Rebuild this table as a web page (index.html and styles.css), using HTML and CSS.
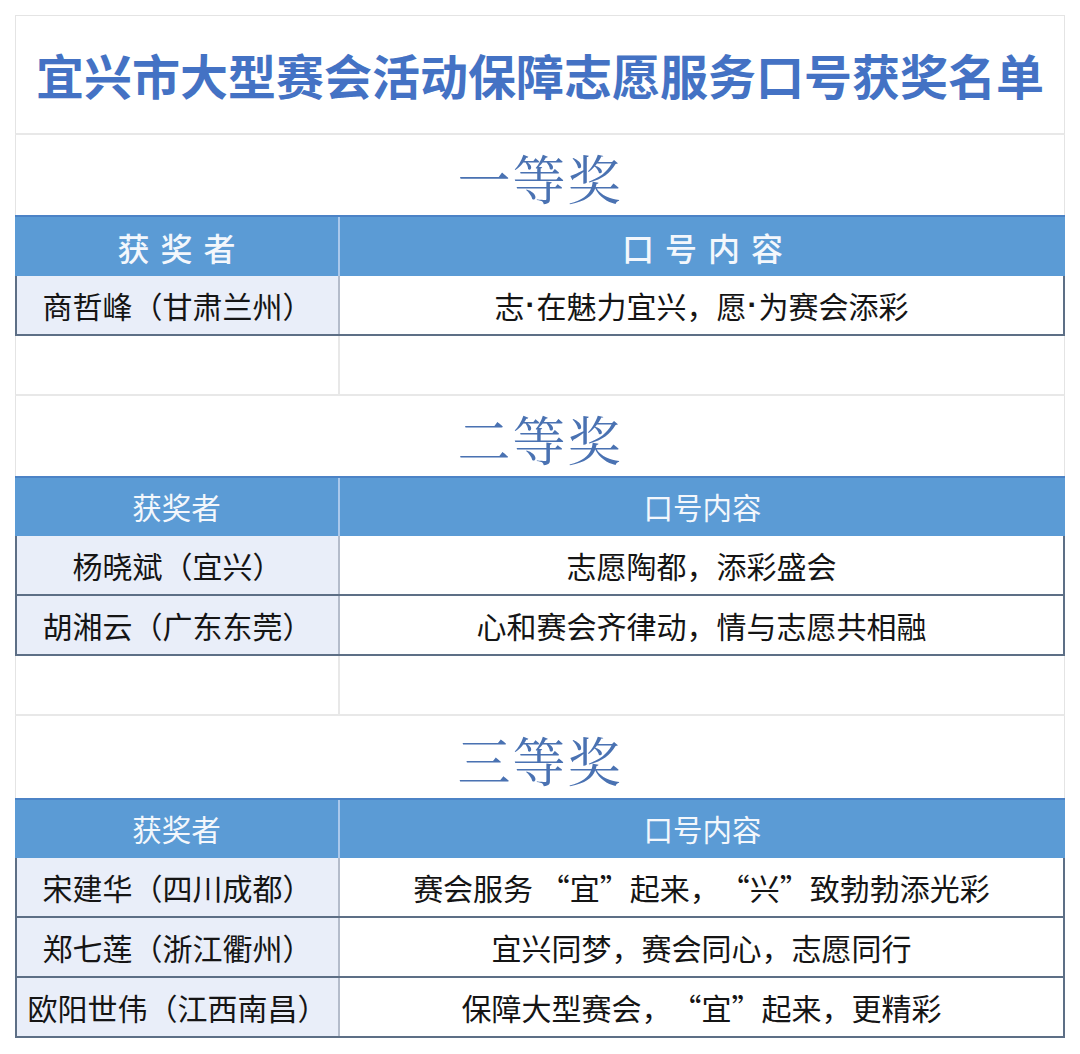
FILE: index.html
```html
<!DOCTYPE html>
<html lang="zh-CN">
<head>
<meta charset="utf-8">
<title>宜兴市大型赛会活动保障志愿服务口号获奖名单</title>
<link rel="stylesheet" href="styles.css">
</head>
<body>
<div class="sheet">
  <div class="title-row"><h1 class="title">宜兴市大型赛会活动保障志愿服务口号获奖名单</h1></div>

  <div class="section-row"><h2 class="section">一等奖</h2></div>
  <div class="head-row head-big"><div class="hc hc-left">获奖者</div><div class="hc">口号内容</div></div>
  <div class="data-row"><div class="dc dc-left">商哲峰（甘肃兰州）</div><div class="dc">志<span class="dot">·</span>在魅力宜兴，愿<span class="dot">·</span>为赛会添彩</div></div>
  <div class="gap-row"><div class="gc gc-left"></div><div class="gc"></div></div>

  <div class="section-row"><h2 class="section">二等奖</h2></div>
  <div class="head-row"><div class="hc hc-left">获奖者</div><div class="hc">口号内容</div></div>
  <div class="data-row"><div class="dc dc-left">杨晓斌（宜兴）</div><div class="dc">志愿陶都，添彩盛会</div></div>
  <div class="data-row"><div class="dc dc-left">胡湘云（广东东莞）</div><div class="dc">心和赛会齐律动，情与志愿共相融</div></div>
  <div class="gap-row"><div class="gc gc-left"></div><div class="gc"></div></div>

  <div class="section-row section-last"><h2 class="section">三等奖</h2></div>
  <div class="head-row"><div class="hc hc-left">获奖者</div><div class="hc">口号内容</div></div>
  <div class="data-row"><div class="dc dc-left">宋建华（四川成都）</div><div class="dc">赛会服务 “宜”起来，“兴”致勃勃添光彩</div></div>
  <div class="data-row"><div class="dc dc-left">郑七莲（浙江衢州）</div><div class="dc">宜兴同梦，赛会同心，志愿同行</div></div>
  <div class="data-row"><div class="dc dc-left">欧阳世伟（江西南昌）</div><div class="dc">保障大型赛会，“宜”起来，更精彩</div></div>
</div>
</body>
</html>
```
FILE: styles.css
```css
* { box-sizing: border-box; }
html, body { margin: 0; padding: 0; background: #ffffff; }
body {
  font-family: "Noto Sans CJK SC", "Noto Sans", sans-serif;
  color: #151515;
  text-spacing-trim: space-all;
}
.sheet {
  width: 1050px;
  margin: 15px 0 0 15px;
}
.title-row {
  height: 120px;
  border: 1px solid #e4e4e4;
  border-bottom: 2px solid #e8e8e8;
  display: flex;
  align-items: center;
  justify-content: center;
}
.title {
  margin: 0;
  font-size: 48px;
  font-weight: 700;
  color: #4472c4;
  line-height: 1;
  white-space: nowrap;
  padding-bottom: 2px;
}
.section-row {
  height: 80px;
  border-left: 1px solid #e4e4e4;
  border-right: 1px solid #e4e4e4;
  display: flex;
  align-items: center;
  justify-content: center;
}
.section-last { height: 82px; }
.section {
  margin: 0;
  font-family: "Noto Serif CJK SC", "Source Han Serif SC", "AR PL UMing CN", "Noto Sans CJK SC", serif;
  font-size: 53px;
  font-weight: 400;
  color: #4a72b2;
  line-height: 1;
  padding-top: 4px;
  letter-spacing: 2px;
}
.head-row {
  height: 60px;
  display: grid;
  grid-template-columns: 325px 1fr;
  background: #5b9bd5;
  border-top: 2px solid #4c83c6;
}
.head-big { height: 61px; }
.hc {
  display: flex;
  align-items: center;
  justify-content: center;
  color: #f3f7fc;
  font-size: 29.5px;
  font-weight: 400;
  line-height: 1;
}
.head-big .hc {
  font-size: 32px;
  font-weight: 500;
  letter-spacing: 11px;
  padding-left: 11px;
}
.hc-left { border-right: 2px solid #a9c8ec; }
.data-row {
  height: 60px;
  display: grid;
  grid-template-columns: 323px 1fr;
  border-left: 2px solid #5d6f86;
  border-right: 2px solid #5d6f86;
  border-bottom: 2px solid #5d6f86;
}
.dc {
  display: flex;
  align-items: center;
  justify-content: center;
  font-size: 30px;
  line-height: 1;
  background: #ffffff;
  color: #151515;
  white-space: pre;
}
.dot {
  font-family: "Liberation Sans", sans-serif;
  font-weight: 700;
  padding: 0 1px;
}
.dc-left {
  background: #e9eef9;
  border-right: 2px solid #b4bccb;
}
.gap-row {
  height: 60px;
  display: grid;
  grid-template-columns: 324px 1fr;
  border-left: 1px solid #e4e4e4;
  border-right: 1px solid #e4e4e4;
  border-bottom: 2px solid #e8e8e8;
}
.gc-left { border-right: 2px solid #e8e8e8; }
```
